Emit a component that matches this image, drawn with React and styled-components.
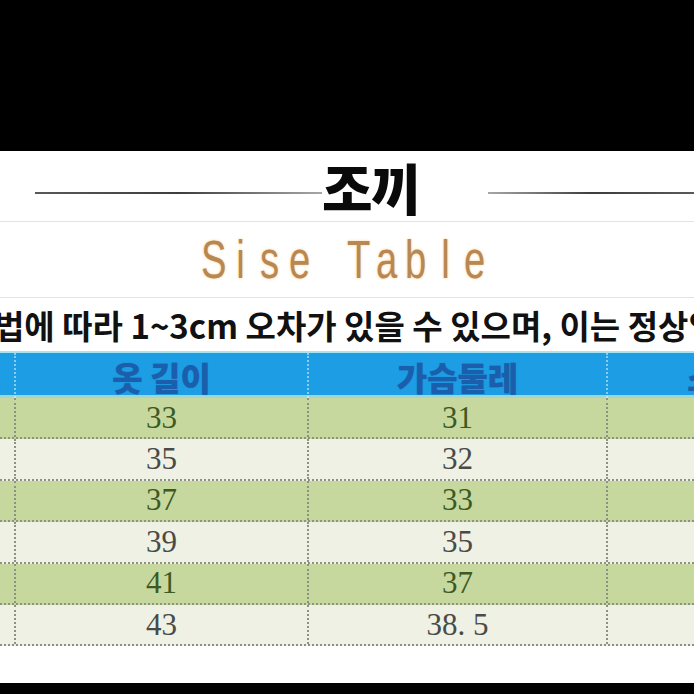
import React from 'react';
import styled, { createGlobalStyle } from 'styled-components';

const GlobalStyle = createGlobalStyle`
  html, body {
    margin: 0;
    padding: 0;
    background: #000;
  }
`;

const Page = styled.div`
  width: 694px;
  height: 694px;
  display: flex;
  flex-direction: column;
  background: #000;
  overflow: hidden;
`;

const BlackBand = styled.div`
  height: ${(p) => p.h}px;
  flex: none;
  background: #000;
`;

const Sheet = styled.div`
  height: 532px;
  flex: none;
  background: #fff;
  display: flex;
  flex-direction: column;
  overflow: hidden;
`;

const TitleRow = styled.div`
  height: 70px;
  display: flex;
  align-items: center;
  padding-left: 35px;
`;

const Rule = styled.div`
  height: 2px;
  width: ${(p) => (p.w ? `${p.w}px` : 'auto')};
  flex: ${(p) => (p.w ? 'none' : '1')};
  margin-top: 14px;
  background: linear-gradient(
    to right,
    rgba(60, 60, 60, ${(p) => (p.fadeLeft ? 0.45 : 0.85)}),
    rgba(40, 40, 40, 0.9) 50%,
    rgba(60, 60, 60, ${(p) => (p.fadeLeft ? 0.85 : 0.45)})
  );
`;

const Title = styled.h1`
  margin: 0 69px 0 0;
  font-family: 'Noto Sans CJK KR', sans-serif;
  font-weight: 900;
  font-size: 55px;
  line-height: 1;
  color: #0a0a0a;
  letter-spacing: -2px;
`;

const Divider = styled.div`
  height: 1px;
  flex: none;
  background: #e3e3e3;
`;

const SubRow = styled.div`
  height: 75px;
  display: flex;
  align-items: center;
  padding-left: 197px;
`;

const Glyph = styled.span`
  display: inline-block;
  width: 29.2px;
  text-align: center;
  font-family: 'Liberation Sans', Arial, sans-serif;
  font-size: 53px;
  line-height: 1;
  color: #b78853;
  text-shadow: 0 0 3px rgba(255, 196, 120, 0.9);
  transform: scaleX(0.72);
`;

const Notice = styled.div`
  height: 53px;
  display: flex;
  align-items: center;
  overflow: hidden;
  white-space: nowrap;
  font-family: 'Noto Sans CJK KR', sans-serif;
  font-weight: 700;
  font-size: 33px;
  color: #111;
  span {
    margin-left: -6px;
  }
`;

const Table = styled.div`
  display: flex;
  flex-direction: column;
  margin-left: -104px;
  border-top: 2px solid #a8e4f2;
`;

const Row = styled.div`
  display: grid;
  grid-template-columns: 120px 293px 299px 282px;
  height: ${(p) => p.h}px;
  background: ${(p) => p.bg};
  border-bottom: ${(p) => (p.head ? '3px solid #9fd6d8' : '2px dotted #8e9284')};
  box-sizing: border-box;
`;

const Cell = styled.div`
  display: flex;
  align-items: center;
  justify-content: center;
  border-right: 2px dotted ${(p) => (p.head ? 'rgba(230, 245, 255, 0.55)' : '#8e9284')};
  font-family: ${(p) =>
    p.head ? "'Noto Sans CJK KR', sans-serif" : "'Liberation Serif', 'Times New Roman', serif"};
  font-weight: ${(p) => (p.head ? 900 : 400)};
  font-size: ${(p) => (p.head ? '33px' : '31px')};
  color: ${(p) => p.color};
  white-space: nowrap;
  ${(p) => p.head && 'text-shadow: 0 0 1px rgba(27, 94, 172, 0.6);'}
`;

const headers = ['사이즈', '옷 길이', '가슴둘레', '소매길이'];

const rows = [
  ['S', '33', '31', '30'],
  ['M', '35', '32', '31'],
  ['L', '37', '33', '32'],
  ['XL', '39', '35', '33'],
  ['2XL', '41', '37', '34'],
  ['3XL', '43', '38. 5', '35'],
];

function App() {
  return (
    <>
      <GlobalStyle />
      <Page>
        <BlackBand h={151} />
        <Sheet>
          <TitleRow>
            <Rule w={287} />
            <Title>조끼</Title>
            <Rule fadeLeft />
          </TitleRow>
          <Divider />
          <SubRow>
            {'Sise Table'.split('').map((ch, i) => (
              <Glyph key={i}>{ch === ' ' ? '\u00a0' : ch}</Glyph>
            ))}
          </SubRow>
          <Divider />
          <Notice>
            <span>법에 따라 1~3cm 오차가 있을 수 있으며, 이는 정상입니다.</span>
          </Notice>
          <Table>
            <Row head h={45} bg="#1d9ee4">
              {headers.map((h, i) => (
                <Cell head key={i} color="#1b5eac">
                  {h}
                </Cell>
              ))}
            </Row>
            {rows.map((r, ri) => {
              const green = ri % 2 === 0;
              return (
                <Row key={ri} h={41.4} bg={green ? '#c6d89e' : '#eef1e3'}>
                  {r.map((v, ci) => (
                    <Cell key={ci} color={green ? '#3e5a22' : '#4a4a48'}>
                      {v}
                    </Cell>
                  ))}
                </Row>
              );
            })}
          </Table>
        </Sheet>
        <BlackBand h={11} />
      </Page>
    </>
  );
}

export default App;
